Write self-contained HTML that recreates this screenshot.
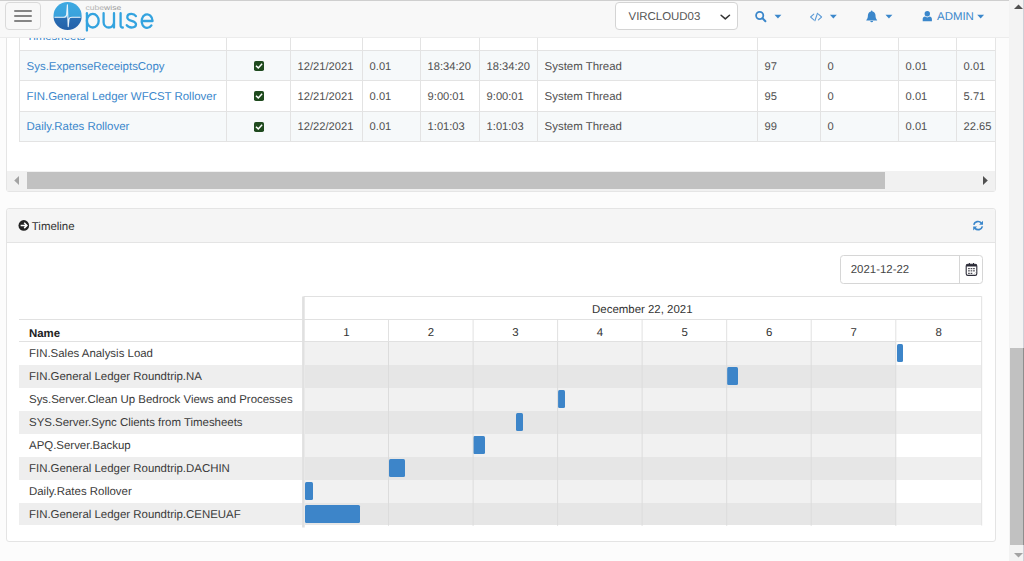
<!DOCTYPE html>
<html><head><meta charset="utf-8">
<style>
*{box-sizing:border-box;margin:0;padding:0}
html,body{width:1024px;height:561px;overflow:hidden;background:#fcfcfc;font-family:"Liberation Sans",sans-serif;font-size:11.45px;color:#333;text-rendering:geometricPrecision}
.abs{position:absolute}
#hdr{left:0;top:0;width:1009px;height:38px;background:#f8f8f8;border-top:1px solid #cfcfcf;border-bottom:1px solid #ececec}
#burger{left:5px;top:1px;width:36px;height:28px;border:1px solid #dadada;border-radius:4px;background:#f8f8f8}
#burger i{position:absolute;left:8px;width:18px;height:1.5px;background:#858585;border-radius:1px}
#sel{left:615px;top:1px;width:123px;height:28px;border:1px solid #d4d4d4;border-radius:4px;background:#fff}
.nav{color:#3b87cb}
#p1{left:6px;top:30px;width:990px;height:162px;background:#fff;border:1px solid #e5e5e5;border-radius:0 0 3px 3px}
#p2{left:6px;top:208px;width:990px;height:334px;background:#fff;border:1px solid #e4e4e4;border-radius:3px}
#p2h{left:0;top:0;width:988px;height:34px;background:#f5f5f5;border-bottom:1px solid #e4e4e4;border-radius:3px 3px 0 0}
#tbl{left:19px;top:20px;width:976px;height:122px;overflow:hidden;border-left:1px solid #e3e3e3;border-bottom:1px solid #e3e3e3}
.row{position:absolute;left:0;width:977px;border-top:1px solid #e3e3e3}
.row.odd{background:#f6f9fa}
.row.even{background:#fff}
.c{position:absolute;top:0;height:100%;border-right:1px solid #e3e3e3;padding-left:6.6px;color:#505050;white-space:nowrap}
.c a{color:#3b87cb}
.sh{display:inline-block}
.chk{position:absolute;width:10px;height:10px}
#hs{left:7px;top:171px;width:988px;height:20px;background:#f1f1f1}
#hst{left:20px;top:1px;width:858px;height:17px;background:#c1c1c1}
#vs{left:1009px;top:0;width:15px;height:561px;background:#f3f3f3}
#vst{left:1px;top:348px;width:14px;height:197px;background:#c1c1c1}
.gn{line-height:23px;white-space:nowrap;color:#3a3a3a}
.bar{position:absolute;height:18.3px;background:#3d85c9;border-radius:1.5px}
</style></head><body>
<div class="abs" id="p1"></div>
<div class="abs" id="tbl">
<div class="row even" style="top:0px;height:30px;line-height:30px"><div class="c" style="left:0px;width:207px"><a class="sh" style="transform:translateY(1px)">Timesheets</a></div><div class="c" style="left:207px;width:64px;padding:0"></div><div class="c" style="left:271px;width:72px;font-size:11.15px"><span class="sh" style="transform:translateY(1px)"></span></div><div class="c" style="left:343px;width:58px;font-size:11.15px"><span class="sh" style="transform:translateY(1px)"></span></div><div class="c" style="left:401px;width:59px;font-size:11.15px"><span class="sh" style="transform:translateY(1px)"></span></div><div class="c" style="left:460px;width:58px;font-size:11.15px"><span class="sh" style="transform:translateY(1px)"></span></div><div class="c" style="left:518px;width:220px"><span class="sh" style="transform:translateY(1px)"></span></div><div class="c" style="left:738px;width:63px;font-size:11.15px"><span class="sh" style="transform:translateY(1px)"></span></div><div class="c" style="left:801px;width:78px;font-size:11.15px"><span class="sh" style="transform:translateY(1px)"></span></div><div class="c" style="left:879px;width:58px;font-size:11.15px"><span class="sh" style="transform:translateY(1px)"></span></div><div class="c" style="left:937px;width:43px;font-size:11.15px"><span class="sh" style="transform:translateY(1px)"></span></div></div>
<div class="row odd" style="top:30px;height:30px;line-height:30px"><div class="c" style="left:0px;width:207px"><a class="sh" style="transform:translateY(1px)">Sys.ExpenseReceiptsCopy</a></div><div class="c" style="left:207px;width:64px;padding:0"><svg class="chk" viewBox="0 0 10 10" style="left:26.7px;top:9.7px"><rect width="10" height="10" rx="1.8" fill="#1f4a1e"/><path d="M2.5 5.2 L4.3 6.9 L7.6 3.4" fill="none" stroke="#fff" stroke-width="1.5" stroke-linecap="square"/></svg></div><div class="c" style="left:271px;width:72px;font-size:11.15px"><span class="sh" style="transform:translateY(1px)">12/21/2021</span></div><div class="c" style="left:343px;width:58px;font-size:11.15px"><span class="sh" style="transform:translateY(1px)">0.01</span></div><div class="c" style="left:401px;width:59px;font-size:11.15px"><span class="sh" style="transform:translateY(1px)">18:34:20</span></div><div class="c" style="left:460px;width:58px;font-size:11.15px"><span class="sh" style="transform:translateY(1px)">18:34:20</span></div><div class="c" style="left:518px;width:220px"><span class="sh" style="transform:translateY(1px)">System Thread</span></div><div class="c" style="left:738px;width:63px;font-size:11.15px"><span class="sh" style="transform:translateY(1px)">97</span></div><div class="c" style="left:801px;width:78px;font-size:11.15px"><span class="sh" style="transform:translateY(1px)">0</span></div><div class="c" style="left:879px;width:58px;font-size:11.15px"><span class="sh" style="transform:translateY(1px)">0.01</span></div><div class="c" style="left:937px;width:43px;font-size:11.15px"><span class="sh" style="transform:translateY(1px)">0.01</span></div></div>
<div class="row even" style="top:60px;height:31px;line-height:30px"><div class="c" style="left:0px;width:207px"><a class="sh" style="transform:translateY(1px)">FIN.General Ledger WFCST Rollover</a></div><div class="c" style="left:207px;width:64px;padding:0"><svg class="chk" viewBox="0 0 10 10" style="left:26.7px;top:9.7px"><rect width="10" height="10" rx="1.8" fill="#1f4a1e"/><path d="M2.5 5.2 L4.3 6.9 L7.6 3.4" fill="none" stroke="#fff" stroke-width="1.5" stroke-linecap="square"/></svg></div><div class="c" style="left:271px;width:72px;font-size:11.15px"><span class="sh" style="transform:translateY(1px)">12/21/2021</span></div><div class="c" style="left:343px;width:58px;font-size:11.15px"><span class="sh" style="transform:translateY(1px)">0.01</span></div><div class="c" style="left:401px;width:59px;font-size:11.15px"><span class="sh" style="transform:translateY(1px)">9:00:01</span></div><div class="c" style="left:460px;width:58px;font-size:11.15px"><span class="sh" style="transform:translateY(1px)">9:00:01</span></div><div class="c" style="left:518px;width:220px"><span class="sh" style="transform:translateY(1px)">System Thread</span></div><div class="c" style="left:738px;width:63px;font-size:11.15px"><span class="sh" style="transform:translateY(1px)">95</span></div><div class="c" style="left:801px;width:78px;font-size:11.15px"><span class="sh" style="transform:translateY(1px)">0</span></div><div class="c" style="left:879px;width:58px;font-size:11.15px"><span class="sh" style="transform:translateY(1px)">0.01</span></div><div class="c" style="left:937px;width:43px;font-size:11.15px"><span class="sh" style="transform:translateY(1px)">5.71</span></div></div>
<div class="row odd" style="top:91px;height:30px;line-height:30px"><div class="c" style="left:0px;width:207px"><a class="sh" style="transform:translateY(0px)">Daily.Rates Rollover</a></div><div class="c" style="left:207px;width:64px;padding:0"><svg class="chk" viewBox="0 0 10 10" style="left:26.7px;top:9.7px"><rect width="10" height="10" rx="1.8" fill="#1f4a1e"/><path d="M2.5 5.2 L4.3 6.9 L7.6 3.4" fill="none" stroke="#fff" stroke-width="1.5" stroke-linecap="square"/></svg></div><div class="c" style="left:271px;width:72px;font-size:11.15px"><span class="sh" style="transform:translateY(0px)">12/22/2021</span></div><div class="c" style="left:343px;width:58px;font-size:11.15px"><span class="sh" style="transform:translateY(0px)">0.01</span></div><div class="c" style="left:401px;width:59px;font-size:11.15px"><span class="sh" style="transform:translateY(0px)">1:01:03</span></div><div class="c" style="left:460px;width:58px;font-size:11.15px"><span class="sh" style="transform:translateY(0px)">1:01:03</span></div><div class="c" style="left:518px;width:220px"><span class="sh" style="transform:translateY(0px)">System Thread</span></div><div class="c" style="left:738px;width:63px;font-size:11.15px"><span class="sh" style="transform:translateY(0px)">99</span></div><div class="c" style="left:801px;width:78px;font-size:11.15px"><span class="sh" style="transform:translateY(0px)">0</span></div><div class="c" style="left:879px;width:58px;font-size:11.15px"><span class="sh" style="transform:translateY(0px)">0.01</span></div><div class="c" style="left:937px;width:43px;font-size:11.15px"><span class="sh" style="transform:translateY(0px)">22.65</span></div></div>
</div>
<div class="abs" id="hs"><div class="abs" id="hst"></div><svg class="abs" style="left:0;top:0" width="988" height="20" viewBox="7 171 988 20"><path d="M19 176 v9 l-4.8 -4.5z" fill="#a3a3a3"/><path d="M983 176 v9 l4.8 -4.5z" fill="#505050"/></svg></div>
<div class="abs" id="hdr">
  <div class="abs" id="burger"><i style="top:7px"></i><i style="top:12px"></i><i style="top:17px"></i></div>
  <svg class="abs" id="logo" style="left:0;top:-1px" width="170" height="37" viewBox="0 0 170 37">
    <defs>
      <linearGradient id="lg1" x1="0" y1="0" x2="0" y2="1"><stop offset="0" stop-color="#3eaae2"/><stop offset="1" stop-color="#369ad6"/></linearGradient>
      <linearGradient id="lg2" x1="0" y1="0" x2="0" y2="1"><stop offset="0" stop-color="#2f80c4"/><stop offset="1" stop-color="#2460a8"/></linearGradient>
      <clipPath id="cpT"><rect x="50" y="0" width="40" height="17.2"/></clipPath>
      <clipPath id="cpB"><rect x="50" y="17.2" width="40" height="20"/></clipPath>
    </defs>
    <circle cx="67.6" cy="16" r="14.1" fill="url(#lg1)" clip-path="url(#cpT)"/>
    <circle cx="67.6" cy="16" r="14.1" fill="url(#lg2)" clip-path="url(#cpB)"/>
    <path d="M55 17.3 H63.5 Q66 17.3 66.6 15 L67.4 4.8 L68.2 26.6 L69 19 Q69.5 17.3 72 17.3 H80" fill="none" stroke="#e8f3fb" stroke-width="1.1" stroke-linejoin="round" stroke-linecap="round"/>
    <g fill="none" stroke="#33a3df" stroke-width="2.3" stroke-linecap="round" stroke-linejoin="round">
      <path d="M86.9 13.2 V30.6"/>
      <ellipse cx="92.8" cy="20.7" rx="5.9" ry="6.8"/>
      <path d="M103.6 13.2 V22.2 A5.2 5.3 0 0 0 114 22.2 V13.2 M114 13.2 V27.6"/>
      <path d="M120.6 13.2 V25.3 Q120.6 27.6 122.8 27.5"/>
      <path d="M135.9 16.1 C134.8 14.5 133.2 13.9 131.4 13.9 C128.9 13.9 127.3 15.3 127.3 17.2 C127.3 19.3 129 20.1 131.6 20.8 C134.4 21.6 136 22.5 136 24.3 C136 26.2 134.2 27.5 131.5 27.5 C129.4 27.5 127.7 26.7 126.7 25.2"/>
      <path d="M141.7 21 H152.6 A5.5 6.8 0 1 0 151.4 25.4"/>
    </g>
    <text x="85.6" y="10.4" font-family="Liberation Sans, sans-serif" font-size="6.9" fill="#b4b4b4" textLength="35.6" lengthAdjust="spacingAndGlyphs">cube<tspan fill="#9c9c9c">wise</tspan></text>
  </svg>
  <div class="abs" id="sel"><span class="abs" style="left:12.5px;top:0;line-height:29px;color:#555">VIRCLOUD03</span>
    <svg class="abs" style="left:103px;top:10px" width="14" height="10" viewBox="0 0 14 10"><path d="M2.1 2.2 L6.3 5.9 L10.5 2.2" fill="none" stroke="#333" stroke-width="1.5" stroke-linecap="round" stroke-linejoin="round"/></svg>
  </div>
  <svg class="abs" style="left:740px;top:-1px" width="268" height="37" viewBox="740 0 268 37">
    <g fill="#3b87cb">
      <path d="M774.5 14.7 h6.9 l-3.45 3.9z"/>
      <path d="M829.9 14.7 h6.9 l-3.45 3.9z"/>
      <path d="M885.5 14.7 h6.9 l-3.45 3.9z"/>
      <path d="M977.2 14.7 h6.9 l-3.45 3.9z"/>
    </g>
    <circle cx="759.7" cy="15.5" r="3.6" fill="none" stroke="#3b87cb" stroke-width="1.8"/>
    <path d="M762.5 18.3 L765.4 21.2" stroke="#3b87cb" stroke-width="2" stroke-linecap="round"/>
    <g fill="none" stroke="#5d9bd6" stroke-width="1.1" stroke-linecap="round" stroke-linejoin="round">
      <path d="M813.8 14.2 L810.6 17 L813.8 19.8"/>
      <path d="M817.5 13.3 L814.9 20.8"/>
      <path d="M818.4 14.2 L821.6 17 L818.4 19.8"/>
    </g>
    <path d="M871.7 10.5 c0.5 0 0.8 0.4 0.8 0.9 c2 0.5 3 2.1 3 4.2 c0 2.4 0.7 3.5 1.6 4.3 v0.6 h-10.8 v-0.6 c0.9 -0.8 1.6 -1.9 1.6 -4.3 c0 -2.1 1 -3.7 3 -4.2 c0 -0.5 0.3 -0.9 0.8 -0.9z M870.3 20.9 h2.8 a1.4 1.4 0 0 1 -2.8 0z" fill="#3b87cb"/>
    <circle cx="927.3" cy="13.7" r="2.7" fill="#3b87cb"/>
    <path d="M922.7 21.3 v-2.2 c0 -1.6 1 -2.5 2.4 -2.5 c0.6 0.5 1.3 0.8 2.2 0.8 s1.6 -0.3 2.2 -0.8 c1.4 0 2.4 0.9 2.4 2.5 v2.2z" fill="#3b87cb"/>
  </svg>
  <span class="abs nav" style="left:937px;top:0;line-height:32px">ADMIN</span>
</div>
<div class="abs" id="p2"><div class="abs" id="p2h"></div><svg class="abs" style="left:0;top:0" width="988" height="333" viewBox="7 209 988 333"><circle cx="23.8" cy="225.4" r="5.3" fill="#222"/><path d="M20.6 225.4 H26.6 M24.2 222.7 L26.9 225.4 L24.2 228.1" fill="none" stroke="#fff" stroke-width="1.5"/><g transform="translate(-0.6 0.2)"><g fill="none" stroke="#3b87cb" stroke-width="1.7"><path d="M974.4 224.6 A4.3 4.3 0 0 1 981.9 222.9"/><path d="M983 226.2 A4.3 4.3 0 0 1 975.5 227.9"/></g><path d="M983.6 220.6 v3.9 h-3.9z M973.8 230.2 v-3.9 h3.9z" fill="#3b87cb"/></g><g stroke="#e1e1e1" stroke-width="1" fill="none"><path d="M303.5 296.5 H981.7 V525.5"/><path d="M19 319.5 H981.7 M19 341.5 H981.7"/><path d="M388.5 319.5 V525.5"/><path d="M473.1 319.5 V525.5"/><path d="M557.6 319.5 V525.5"/><path d="M642.1 319.5 V525.5"/><path d="M726.7 319.5 V525.5"/><path d="M811.2 319.5 V525.5"/><path d="M895.8 319.5 V525.5"/></g></svg><div class="abs" style="left:12.0px;top:133.0px;width:284px;height:23px;background:#fff"></div><div class="abs" style="left:297.6px;top:133.0px;width:591.4px;height:23px;background:#f1f1f1"></div><div class="abs" style="left:889.0px;top:133.0px;width:85.3px;height:23px;background:#fff"></div><div class="abs gn" style="left:22.0px;top:134.0px">FIN.Sales Analysis Load</div><div class="bar" style="left:890.0px;top:135.2px;width:6.3px"></div><div class="abs" style="left:12.0px;top:156.0px;width:284px;height:23px;background:#eeeeee"></div><div class="abs" style="left:297.6px;top:156.0px;width:591.4px;height:23px;background:#e6e6e6"></div><div class="abs" style="left:889.0px;top:156.0px;width:85.3px;height:23px;background:#efefef"></div><div class="abs gn" style="left:22.0px;top:157.0px">FIN.General Ledger Roundtrip.NA</div><div class="bar" style="left:720.0px;top:158.2px;width:11.2px"></div><div class="abs" style="left:12.0px;top:179.0px;width:284px;height:23px;background:#fff"></div><div class="abs" style="left:297.6px;top:179.0px;width:591.4px;height:23px;background:#f1f1f1"></div><div class="abs" style="left:889.0px;top:179.0px;width:85.3px;height:23px;background:#fff"></div><div class="abs gn" style="left:22.0px;top:180.0px">Sys.Server.Clean Up Bedrock Views and Processes</div><div class="bar" style="left:551.0px;top:181.2px;width:7.0px"></div><div class="abs" style="left:12.0px;top:202.0px;width:284px;height:23px;background:#eeeeee"></div><div class="abs" style="left:297.6px;top:202.0px;width:591.4px;height:23px;background:#e6e6e6"></div><div class="abs" style="left:889.0px;top:202.0px;width:85.3px;height:23px;background:#efefef"></div><div class="abs gn" style="left:22.0px;top:203.0px">SYS.Server.Sync Clients from Timesheets</div><div class="bar" style="left:509.0px;top:204.2px;width:7.0px"></div><div class="abs" style="left:12.0px;top:225.0px;width:284px;height:23px;background:#fff"></div><div class="abs" style="left:297.6px;top:225.0px;width:591.4px;height:23px;background:#f1f1f1"></div><div class="abs" style="left:889.0px;top:225.0px;width:85.3px;height:23px;background:#fff"></div><div class="abs gn" style="left:22.0px;top:226.0px">APQ.Server.Backup</div><div class="bar" style="left:466.3px;top:227.2px;width:11.7px"></div><div class="abs" style="left:12.0px;top:248.0px;width:284px;height:23px;background:#eeeeee"></div><div class="abs" style="left:297.6px;top:248.0px;width:591.4px;height:23px;background:#e6e6e6"></div><div class="abs" style="left:889.0px;top:248.0px;width:85.3px;height:23px;background:#efefef"></div><div class="abs gn" style="left:22.0px;top:249.0px">FIN.General Ledger Roundtrip.DACHIN</div><div class="bar" style="left:382.2px;top:250.2px;width:16.1px"></div><div class="abs" style="left:12.0px;top:271.0px;width:284px;height:23px;background:#fff"></div><div class="abs" style="left:297.6px;top:271.0px;width:591.4px;height:23px;background:#f1f1f1"></div><div class="abs" style="left:889.0px;top:271.0px;width:85.3px;height:23px;background:#fff"></div><div class="abs gn" style="left:22.0px;top:272.0px">Daily.Rates Rollover</div><div class="bar" style="left:298.1px;top:273.2px;width:7.7px"></div><div class="abs" style="left:12.0px;top:294.0px;width:284px;height:22px;background:#eeeeee"></div><div class="abs" style="left:297.6px;top:294.0px;width:591.4px;height:22px;background:#e6e6e6"></div><div class="abs" style="left:889.0px;top:294.0px;width:85.3px;height:22px;background:#efefef"></div><div class="abs gn" style="left:22.0px;top:295.0px">FIN.General Ledger Roundtrip.CENEUAF</div><div class="bar" style="left:298.1px;top:296.2px;width:54.9px"></div><svg class="abs" style="left:0;top:0" width="988" height="333" viewBox="7 209 988 333"><g stroke="#dcdcdc" stroke-width="1"><path d="M388.5 342 V525.5"/><path d="M473.1 342 V525.5"/><path d="M557.6 342 V525.5"/><path d="M642.1 342 V525.5"/><path d="M726.7 342 V525.5"/><path d="M811.2 342 V525.5"/><path d="M895.8 342 V525.5"/></g><rect x="302.1" y="296.5" width="2.6" height="231" fill="#e0e0e0"/></svg><div class="abs" style="left:296.3px;top:90.0px;width:678px;text-align:center;line-height:23px;color:#333">December 22, 2021</div><div class="abs" style="left:297.1px;top:112.5px;width:84.5px;text-align:center;line-height:22px;color:#333">1</div><div class="abs" style="left:381.7px;top:112.5px;width:84.5px;text-align:center;line-height:22px;color:#333">2</div><div class="abs" style="left:466.2px;top:112.5px;width:84.5px;text-align:center;line-height:22px;color:#333">3</div><div class="abs" style="left:550.8px;top:112.5px;width:84.5px;text-align:center;line-height:22px;color:#333">4</div><div class="abs" style="left:635.4px;top:112.5px;width:84.5px;text-align:center;line-height:22px;color:#333">5</div><div class="abs" style="left:719.9px;top:112.5px;width:84.5px;text-align:center;line-height:22px;color:#333">6</div><div class="abs" style="left:804.5px;top:112.5px;width:84.5px;text-align:center;line-height:22px;color:#333">7</div><div class="abs" style="left:889.4px;top:112.5px;width:84.5px;text-align:center;line-height:22px;color:#333">8</div><div class="abs" style="left:22.0px;top:114.0px;line-height:22px;font-weight:bold;color:#222">Name</div><div class="abs" style="left:24.8px;top:0.0px;line-height:36px;color:#333">Timeline</div><div class="abs" style="left:833.2px;top:46.1px;width:142.5px;height:29px;border:1px solid #d6d6d6;border-radius:3.5px;background:#fff"><div class="abs" style="left:118px;top:0;width:1px;height:27px;background:#d6d6d6"></div><span class="abs" style="left:9.5px;top:0;line-height:29px;color:#444">2021-12-22</span></div><svg class="abs" style="left:0;top:0" width="988" height="333" viewBox="7 209 988 333"><rect x="966.2" y="264.3" width="10.6" height="11.1" rx="1.7" fill="#fff" stroke="#2c2c38" stroke-width="1.1"/><path d="M966.2 266.6 V266 a1.7 1.7 0 0 1 1.7 -1.7 h7.2 a1.7 1.7 0 0 1 1.7 1.7 V266.6z" fill="#2c2c38"/><path d="M969.4 263 V265 M973.5 263 V265" stroke="#2c2c38" stroke-width="1"/><rect x="968.1" y="268.1" width="1.7" height="1.1" fill="#3a3a44"/><rect x="968.1" y="270.3" width="1.7" height="1.1" fill="#3a3a44"/><rect x="968.1" y="272.8" width="1.7" height="1.1" fill="#3a3a44"/><rect x="970.6" y="268.1" width="1.7" height="1.1" fill="#3a3a44"/><rect x="970.6" y="270.3" width="1.7" height="1.1" fill="#3a3a44"/><rect x="970.6" y="272.8" width="1.7" height="1.1" fill="#3a3a44"/><rect x="973.1" y="268.1" width="1.7" height="1.1" fill="#3a3a44"/><rect x="973.1" y="270.3" width="1.7" height="1.1" fill="#3a3a44"/><path d="M973.2 274.9 L976.3 271.8" stroke="#bbb" stroke-width="0.6"/></svg></div>
<div class="abs" id="vs"><div class="abs" id="vst"></div><svg class="abs" style="left:0;top:0" width="15" height="561" viewBox="1009 0 15 561"><path d="M1014 9 h9 l-4.5 -4.6z" fill="#505050"/><path d="M1014 553 h9 l-4.5 4.6z" fill="#a3a3a3"/><rect x="1023" y="0" width="1" height="561" fill="#d0d0d8"/><rect x="1023" y="348" width="1" height="197" fill="#8e8e8e"/></svg></div>
</body></html>
